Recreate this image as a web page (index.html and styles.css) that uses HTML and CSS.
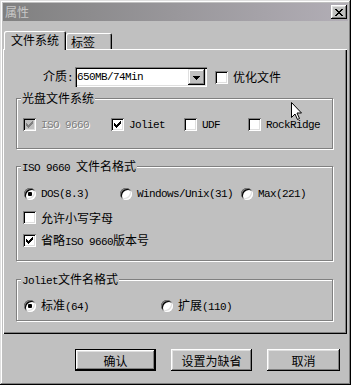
FILE: index.html
```
<!DOCTYPE html>
<html lang="zh">
<head>
  <meta charset="UTF-8" />
  <title>属性</title>
  <link rel="stylesheet" href="styles.css">
</head>
<body>
  <div class="window">
    <div class="titlebar">
      <span class="title">属性</span>
      <span class="close">
        <svg width="8" height="7" viewBox="0 0 8 7"><path d="M0 0h2v1h-2z M6 0h2v1h-2z M1 1h2v1h-2z M5 1h2v1h-2z M2 2h4v1h-4z M3 3h2v1h-2z M2 4h4v1h-4z M1 5h2v1h-2z M5 5h2v1h-2z M0 6h2v1h-2z M6 6h2v1h-2z" fill="#000"/></svg>
      </span>
    </div>

    <div class="tabs">
      <div class="tab active">文件系统</div>
      <div class="tab">标签</div>
    </div>

    <div class="panel">
      <div class="media-row">
        <span class="label">介质<span class="en">:</span></span>
        <div class="select">
          <span class="en">650MB/74Min</span>
          <span class="drop">
            <svg width="7" height="4" viewBox="0 0 7 4"><path d="M0 0h7v1h-7z M1 1h5v1h-5z M2 2h3v1h-3z M3 3h1v1h-1z" fill="#000"/></svg>
          </span>
        </div>
        <span class="check-item opt">
          <span class="box"></span>
          <span>优化文件</span>
        </span>
      </div>

      <div class="group g1">
        <span class="legend">光盘文件系统</span>
        <div class="row">
          <span class="check-item w88 disabled">
            <span class="box checked"><svg width="13" height="13" viewBox="0 0 13 13"><path d="M3 5h1v3h-1z M4 6h1v3h-1z M5 7h1v3h-1z M6 6h1v3h-1z M7 5h1v3h-1z M8 4h1v3h-1z M9 3h1v3h-1z"/></svg></span>
            <span class="en">ISO 9660</span>
          </span>
          <span class="check-item w73">
            <span class="box checked"><svg width="13" height="13" viewBox="0 0 13 13"><path d="M3 5h1v3h-1z M4 6h1v3h-1z M5 7h1v3h-1z M6 6h1v3h-1z M7 5h1v3h-1z M8 4h1v3h-1z M9 3h1v3h-1z"/></svg></span>
            <span class="en">Joliet</span>
          </span>
          <span class="check-item w64">
            <span class="box"></span>
            <span class="en">UDF</span>
          </span>
          <span class="check-item">
            <span class="box"></span>
            <span class="en">RockRidge</span>
          </span>
        </div>
      </div>

      <div class="group g2">
        <span class="legend"><span class="en">ISO 9660 </span>文件名格式</span>
        <div class="row radios">
          <span class="radio-item w96">
            <span class="radio on"></span>
            <span class="en">DOS(8.3)</span>
          </span>
          <span class="radio-item w121">
            <span class="radio"></span>
            <span class="en">Windows/Unix(31)</span>
          </span>
          <span class="radio-item">
            <span class="radio"></span>
            <span class="en">Max(221)</span>
          </span>
        </div>
        <div class="row lower">
          <span class="check-item">
            <span class="box"></span>
            <span>允许小写字母</span>
          </span>
        </div>
        <div class="row omit">
          <span class="check-item">
            <span class="box checked"><svg width="13" height="13" viewBox="0 0 13 13"><path d="M3 5h1v3h-1z M4 6h1v3h-1z M5 7h1v3h-1z M6 6h1v3h-1z M7 5h1v3h-1z M8 4h1v3h-1z M9 3h1v3h-1z"/></svg></span>
            <span>省略<span class="en">ISO 9660</span>版本号</span>
          </span>
        </div>
      </div>

      <div class="group g3">
        <span class="legend"><span class="en">Joliet</span>文件名格式</span>
        <div class="row radios">
          <span class="radio-item w137">
            <span class="radio on"></span>
            <span>标准<span class="en">(64)</span></span>
          </span>
          <span class="radio-item">
            <span class="radio"></span>
            <span>扩展<span class="en">(110)</span></span>
          </span>
        </div>
      </div>
    </div>

    <div class="buttons">
      <button class="btn default w81">确认</button>
      <button class="btn w81">设置为缺省</button>
      <button class="btn w73">取消</button>
    </div>

    <svg class="cursor" width="12" height="19" viewBox="0 0 12 19"><path d="M0.5 0.5 V15.5 L4 12 L6.5 17.5 L8.5 16.5 L6 11 H10.5 Z" fill="#fff" stroke="#000" stroke-width="1"/></svg>
  </div>
</body>
</html>
```
FILE: styles.css
```
* {
  box-sizing: border-box;
}

html, body {
  margin: 0;
  background: #c0c0c0;
  font-family: "Noto Sans CJK SC", sans-serif;
  font-size: 12px;
  line-height: 12px;
  color: #000;
}

.en {
  font-family: "Liberation Mono", "Noto Sans CJK SC", monospace;
  font-size: 11px;
  letter-spacing: -0.6px;
}

.window {
  position: relative;
  width: 351px;
  height: 385px;
  padding: 3px;
  display: flex;
  flex-direction: column;
  background: #c0c0c0;
  box-shadow: inset -1px -1px #000, inset 1px 1px #dfdfdf,
              inset -2px -2px #808080, inset 2px 2px #fff;
}

.titlebar {
  height: 18px;
  display: flex;
  align-items: center;
  padding: 0 1px 0 1px;
  background: linear-gradient(to right, #808080, #b2aeb6);
}

.title {
  color: #c8c8c8;
  padding-left: 1px;
  flex: 1;
}

.close {
  width: 16px;
  height: 14px;
  display: flex;
  align-items: center;
  justify-content: center;
  background: #c0c0c0;
  box-shadow: inset -1px -1px #000, inset 1px 1px #fff,
              inset -2px -2px #808080, inset 2px 2px #dfdfdf;
}

.tabs {
  display: flex;
  align-items: flex-end;
  margin-top: 10px;
  padding-left: 1px;
  margin-bottom: -1px;
  position: relative;
  z-index: 1;
}

.tab {
  background: #c0c0c0;
  border-radius: 2px 2px 0 0;
  box-shadow: inset 1px 1px #fff, inset -1px 0 #000, inset -2px 0 #808080;
  display: flex;
  align-items: center;
}

.tab.active {
  width: 62px;
  height: 19px;
  padding: 0 0 1px 7px;
}

.tab:not(.active) {
  width: 46px;
  height: 16px;
  margin-bottom: 1px;
  padding: 2px 0 0 5px;
}

.panel {
  width: 344px;
  height: 285px;
  display: flex;
  flex-direction: column;
  box-shadow: inset 1px 1px #fff, inset -1px -1px #000, inset -2px -2px #808080;
}

.media-row {
  display: flex;
  align-items: center;
  height: 20px;
  margin-top: 18px;
  padding-left: 40px;
}

.label {
  margin-right: 2px;
}

.select {
  width: 132px;
  height: 20px;
  display: flex;
  align-items: center;
  padding: 2px;
  background: #fff;
  box-shadow: inset 1px 1px #808080, inset 2px 2px #000,
              inset -1px -1px #fff, inset -2px -2px #dfdfdf;
}

.drop {
  margin-left: auto;
  width: 17px;
  height: 16px;
  display: flex;
  align-items: center;
  justify-content: center;
  padding-top: 1px;
  background: #c0c0c0;
  box-shadow: inset -1px -1px #000, inset 1px 1px #dfdfdf,
              inset -2px -2px #808080, inset 2px 2px #fff;
}

.check-item, .radio-item {
  display: flex;
  align-items: center;
  gap: 5px;
  flex: none;
}

.opt {
  margin-left: 8px;
}

.box {
  width: 13px;
  height: 13px;
  flex: none;
  background: #fff;
  box-shadow: inset 1px 1px #808080, inset -1px -1px #fff,
              inset 2px 2px #000, inset -2px -2px #dfdfdf;
}

.box svg {
  display: block;
  fill: #000;
}

.disabled .box {
  background: #c0c0c0;
}

.disabled .box svg {
  fill: #808080;
}

.disabled .en {
  color: #808080;
  text-shadow: 1px 1px #fff;
}

.radio {
  width: 12px;
  height: 12px;
  flex: none;
  margin-left: 1px;
  border-radius: 50%;
  background: #fff;
  display: flex;
  align-items: center;
  justify-content: center;
  box-shadow: inset 1px 1px #808080, inset -1px -1px #fff,
              inset 2px 2px #000, inset -2px -2px #dfdfdf;
}

.radio.on::after {
  content: "";
  width: 4px;
  height: 4px;
  border-radius: 1px;
  background: #000;
}

.group {
  margin-left: 13px;
  width: 317px;
  display: flex;
  flex-direction: column;
  border: 1px solid #808080;
  box-shadow: inset 1px 1px #fff, 1px 1px #fff;
}

.legend {
  align-self: flex-start;
  height: 12px;
  margin: -7px 0 0 4px;
  padding: 0 1px;
  background: #c0c0c0;
  white-space: nowrap;
}

.row {
  display: flex;
  align-items: center;
  height: 13px;
  padding-left: 6px;
}

.g1 {
  height: 51px;
  margin-top: 11px;
}

.g1 .row {
  margin-top: 14px;
}

.g2 {
  height: 95px;
  margin-top: 17px;
}

.g2 .radios {
  margin-top: 15px;
}

.g2 .lower {
  margin-top: 11px;
}

.g2 .omit {
  margin-top: 10px;
}

.g3 {
  height: 42px;
  margin-top: 18px;
}

.g3 .radios {
  margin-top: 14px;
}

.w64 { width: 64px; }
.w73 { width: 73px; }
.w81 { width: 81px; }
.w88 { width: 88px; }
.w96 { width: 96px; }
.w121 { width: 121px; }
.w137 { width: 137px; }

.buttons {
  display: flex;
  gap: 15px;
  margin-top: 15px;
  padding-left: 72px;
}

.btn {
  height: 22px;
  padding: 0;
  border: 0;
  background: #c0c0c0;
  font-family: "Noto Sans CJK SC", sans-serif;
  font-size: 12px;
  color: #000;
  box-shadow: inset -1px -1px #000, inset 1px 1px #fff,
              inset -2px -2px #808080, inset 2px 2px #dfdfdf;
}

.btn.default {
  border: 1px solid #000;
}

.cursor {
  position: absolute;
  left: 291px;
  top: 102px;
}
```
